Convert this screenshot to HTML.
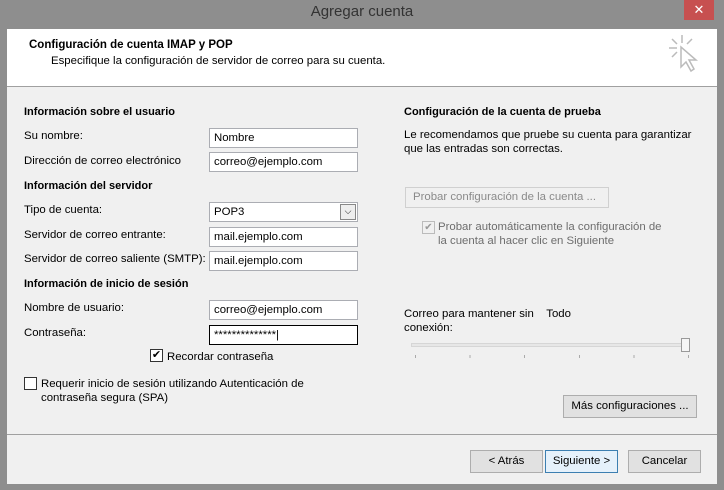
<!DOCTYPE html><html><head><style>
*{margin:0;padding:0;box-sizing:border-box}
body{width:724px;height:490px;background:#8e8e8e;font-family:"Liberation Sans",sans-serif;font-size:11.4px;color:#000;position:relative;overflow:hidden}
.a{position:absolute;white-space:nowrap}
.b{font-weight:bold;font-size:11px}
.in{position:absolute;left:209px;width:149px;height:20px;background:#fff;border:1px solid #abadb3;padding:3px 4px;font-size:11.4px}
.btn{position:absolute;background:#e1e1e1;border:1px solid #adadad;text-align:center;line-height:21px;height:23px}
</style></head><body>
<div class="a" style="left:0;top:3px;width:724px;text-align:center;font-size:15px;color:#333">Agregar cuenta</div>
<div class="a" style="left:684px;top:0;width:30px;height:20px;background:#c75050;color:#fff;text-align:center;font-size:13px;line-height:19px">✕</div>
<div class="a" style="left:7px;top:29px;width:710px;height:455px;background:#f0f0f0"></div>
<div class="a" style="left:7px;top:29px;width:710px;height:58px;background:#fff;border-bottom:1px solid #a0a0a0"></div>
<div class="a b" style="left:29px;top:39px;font-size:11.5px">Configuración de cuenta IMAP y POP</div>
<div class="a" style="left:51px;top:55px">Especifique la configuración de servidor de correo para su cuenta.</div>
<svg class="a" style="left:666px;top:33px" width="40" height="50"><g stroke="#bbb" stroke-width="1.5" fill="none"><path d="M16 2v8M6 6l5 5M3 15h8M26 6l-5 5M6 24l5-5"/><path d="M15 14l0 20 5-5 5 9 3-2-5-9 7 0z" fill="#fff"/></g></svg>
<div class="a b" style="left:24px;top:106px">Información sobre el usuario</div>
<div class="a" style="left:24px;top:130px">Su nombre:</div>
<div class="in" style="top:128px">Nombre</div>
<div class="a" style="left:24px;top:155px">Dirección de correo electrónico</div>
<div class="in" style="top:152px">correo@ejemplo.com</div>
<div class="a b" style="left:24px;top:180px">Información del servidor</div>
<div class="a" style="left:24px;top:204px">Tipo de cuenta:</div>
<div class="in" style="top:202px">POP3<span style="position:absolute;right:1px;top:1px;width:16px;height:16px;border:1px solid #888;background:#eee;text-align:center;line-height:13px;font-size:9px">⌵</span></div>
<div class="a" style="left:24px;top:229px">Servidor de correo entrante:</div>
<div class="in" style="top:227px">mail.ejemplo.com</div>
<div class="a" style="left:24px;top:253px">Servidor de correo saliente (SMTP):</div>
<div class="in" style="top:251px">mail.ejemplo.com</div>
<div class="a b" style="left:24px;top:278px">Información de inicio de sesión</div>
<div class="a" style="left:24px;top:302px">Nombre de usuario:</div>
<div class="in" style="top:300px">correo@ejemplo.com</div>
<div class="a" style="left:24px;top:327px">Contraseña:</div>
<div class="in" style="top:325px;border-color:#000">**************|</div>
<div class="a" style="left:150px;top:349px;width:13px;height:13px;border:1px solid #333;background:#fff;font-size:11px;line-height:11px;text-align:center">✔</div>
<div class="a" style="left:167px;top:351px">Recordar contraseña</div>
<div class="a" style="left:24px;top:377px;width:13px;height:13px;border:1px solid #333;background:#fff"></div>
<div class="a" style="left:41px;top:377px;line-height:14px">Requerir inicio de sesión utilizando Autenticación de<br>contraseña segura (SPA)</div>
<div class="a b" style="left:404px;top:106px">Configuración de la cuenta de prueba</div>
<div class="a" style="left:404px;top:128px;line-height:14px">Le recomendamos que pruebe su cuenta para garantizar<br>que las entradas son correctas.</div>
<div class="a" style="left:405px;top:187px;width:204px;height:21px;border:1px solid #d0d0d0;color:#8a8a8a;line-height:19px;padding-left:7px">Probar configuración de la cuenta ...</div>
<div class="a" style="left:422px;top:221px;width:13px;height:13px;border:1px solid #bbb;color:#999;font-size:10px;line-height:11px;text-align:center">✔</div>
<div class="a" style="left:438px;top:220px;color:#6d6d6d;line-height:14px">Probar automáticamente la configuración de<br>la cuenta al hacer clic en Siguiente</div>
<div class="a" style="left:404px;top:307px;line-height:14px">Correo para mantener sin &nbsp;&nbsp; Todo<br>conexión:</div>
<div class="a" style="left:411px;top:343px;width:278px;height:4px;border:1px solid #d6d6d6;background:#e7e7e7"></div>
<div class="a" style="left:681px;top:338px;width:9px;height:14px;border:1px solid #999;background:#f5f5f5"></div>
<div class="a" style="left:415px;top:355px;width:275px;height:3px;background:repeating-linear-gradient(90deg,#aaa 0 1px,transparent 1px 54.6px)"></div>
<div class="btn" style="left:563px;top:395px;width:134px">Más configuraciones ...</div>
<div class="a" style="left:7px;top:434px;width:710px;height:1px;background:#a0a0a0"></div>
<div class="btn" style="left:470px;top:450px;width:73px">&lt; Atrás</div>
<div class="btn" style="left:545px;top:450px;width:73px;border-color:#3c7fb1;background:#e5f1fb">Siguiente &gt;</div>
<div class="btn" style="left:628px;top:450px;width:73px">Cancelar</div>
</body></html>
